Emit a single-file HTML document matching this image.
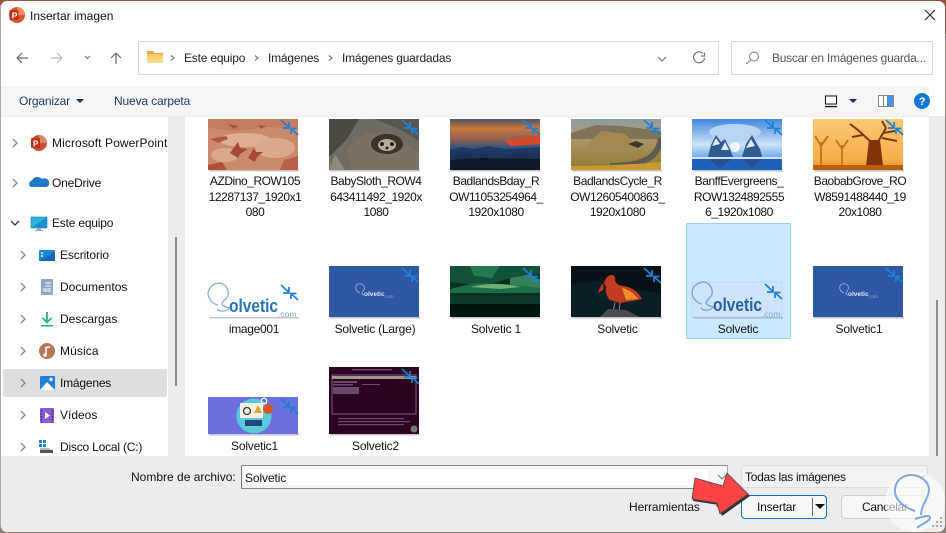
<!DOCTYPE html>
<html><head><meta charset="utf-8"><style>
html,body{margin:0;padding:0;width:946px;height:533px;overflow:hidden;background:#8a8078}
body{position:relative;font-family:"Liberation Sans",sans-serif;font-size:12px;color:#111}
div,span{position:absolute;box-sizing:border-box}
.t{white-space:nowrap;line-height:16px;letter-spacing:-.2px}
.l{text-align:center;line-height:15.5px;width:105px;white-space:pre-line;letter-spacing:-.45px}
.s{letter-spacing:-.2px}
svg{position:absolute;left:0;top:0}
</style></head><body>
<div style="left:0;top:0;width:946px;height:3px;background:#a2523c"></div>
<div style="left:0;top:0;width:1px;height:34px;background:#a2523c"></div>
<div style="left:945px;top:0;width:1px;height:34px;background:#a2523c"></div>
<div style="left:0;top:1px;width:945px;height:531px;background:#fff;border-radius:7px;border-left:1px solid #aaa"></div>
<div style="left:1px;top:86px;width:928px;height:30px;background:#f5f5f5"></div>
<div style="left:168px;top:116px;width:17px;height:340px;background:#ececec"></div>
<div style="left:929px;top:116px;width:16px;height:340px;background:#ececec"></div>
<div style="left:175px;top:237px;width:2px;height:149px;background:#8c8c8c"></div>
<div style="left:936px;top:300px;width:2px;height:156px;background:#8c8c8c"></div>
<div style="left:1px;top:456px;width:944px;height:76px;background:#ececec;border-radius:0 0 7px 7px"></div>
<div style="left:1px;top:116px;width:928px;height:1px;background:#eee"></div>
<div style="left:3px;top:369px;width:164px;height:28px;background:#dedede;border-radius:2px"></div>
<div style="left:686px;top:223px;width:105px;height:116px;background:#cce8ff;border:1px solid #99d1ff;border-radius:1px"></div>
<div style="left:138px;top:41px;width:581px;height:34px;border:1px solid #d9d9d9"></div>
<div style="left:731px;top:41px;width:202px;height:34px;border:1px solid #d9d9d9"></div>
<div style="left:241px;top:465px;width:487px;height:24px;background:#f6f6f6;border:1px solid #8a8a8a;border-left-color:#777;border-right-color:#aaa;border-radius:1px"></div>
<div style="left:243px;top:470px;width:465px;height:15px;background:#fff"></div>
<div style="left:741px;top:465px;width:187px;height:23px;background:#f2f2f2;border:1px solid #ddd;border-radius:3px"></div>
<div style="left:741px;top:495px;width:86px;height:24px;background:#f6f6f6;border:1.5px solid #0f6cbd;border-radius:4px"></div>
<div style="left:841px;top:495px;width:85px;height:24px;background:#f6f6f6;border:1px solid #cfcfcf;border-radius:4px"></div>
<div style="left:812px;top:498px;width:1px;height:18px;background:#666"></div>

<svg width="946" height="533" viewBox="0 0 946 533">
<defs>
<clipPath id="c1"><rect x="208" y="119" width="90" height="51"/></clipPath>
<clipPath id="c2"><rect x="329" y="119" width="90" height="51"/></clipPath>
<clipPath id="c3"><rect x="450" y="119" width="90" height="51"/></clipPath>
<clipPath id="c4"><rect x="571" y="119" width="90" height="51"/></clipPath>
<clipPath id="c5"><rect x="692" y="119" width="90" height="51"/></clipPath>
<clipPath id="c6"><rect x="813" y="119" width="90" height="51"/></clipPath>
<clipPath id="c9"><rect x="571" y="266" width="90" height="51"/></clipPath>
<clipPath id="c8"><rect x="450" y="266" width="90" height="51"/></clipPath>
<linearGradient id="g3" x1="0" y1="0" x2="0" y2="1"><stop offset="0" stop-color="#4a5468"/><stop offset=".18" stop-color="#c9783c"/><stop offset=".4" stop-color="#8f6050"/><stop offset=".58" stop-color="#2d5288"/><stop offset=".75" stop-color="#1e3560"/><stop offset="1" stop-color="#121c2c"/></linearGradient>
<linearGradient id="g4" x1="0" y1="0" x2="0" y2="1"><stop offset="0" stop-color="#8a9ca8"/><stop offset=".28" stop-color="#b09c70"/><stop offset="1" stop-color="#8f7a30"/></linearGradient>
<linearGradient id="g5" x1="0" y1="0" x2="0" y2="1"><stop offset="0" stop-color="#3f86dc"/><stop offset=".5" stop-color="#cfe2f8"/><stop offset=".72" stop-color="#7fb2ec"/><stop offset="1" stop-color="#1a5cb0"/></linearGradient>
<linearGradient id="g6" x1="0" y1="0" x2="0" y2="1"><stop offset="0" stop-color="#fbc878"/><stop offset=".8" stop-color="#f5ae4a"/><stop offset="1" stop-color="#e08a20"/></linearGradient>
<linearGradient id="gf" x1="0" y1="0" x2="0" y2="1"><stop offset="0" stop-color="#f8c860"/><stop offset="1" stop-color="#fbdc90"/></linearGradient>
<g id="ar" fill="none" stroke="#1f80d8" stroke-width="1.7"><path d="M-17 2L-9 9.5M-9 4V10H-15"/><path d="M0 17L-7 10.5M-7 16V10.5H-1.5"/></g>
</defs>

<!-- titlebar icon -->
<circle cx="17" cy="15" r="8" fill="#d9542b"/><path d="M17 7a8 8 0 0 1 8 8h-8z" fill="#f08a5d"/>
<rect x="9.500" y="10" width="9" height="10" rx="1" fill="#b7361a"/>
<text x="11.700" y="18.500" font-size="8.500" font-weight="bold" fill="#fff" font-family="Liberation Sans">P</text>
<path d="M925 10L935 20M935 10L925 20" stroke="#222" stroke-width="1.1"/>

<!-- nav buttons -->
<path d="M17 58H28M17 58L22 53M17 58L22 63" stroke="#666" fill="none" stroke-width="1.2"/>
<path d="M51 58H62M62 58L57 53M62 58L57 63" stroke="#bbb" fill="none" stroke-width="1.2"/>
<path d="M85 56L87.500 58.500L90 56" stroke="#777" fill="none" stroke-width="1.100"/>
<path d="M116 64V53M116 53L111 58M116 53L121 58" stroke="#666" fill="none" stroke-width="1.2"/>
<path d="M147 51h6l2 2h8v3h-16z" fill="#e6aa3c"/><rect x="147" y="54" width="16" height="9" fill="url(#gf)"/>
<path d="M171 55.500L174 58L171 60.500M255 55.500L258 58L255 60.500M329 55.500L332 58L329 60.500" stroke="#777" fill="none" stroke-width="1.2"/>
<path d="M658 57L662 61L666 57" stroke="#777" fill="none" stroke-width="1.100"/>
<path d="M703 53.500A5.500 5.500 0 1 0 704.500 58M704.500 52.500V56H701" stroke="#777" fill="none" stroke-width="1.200"/>
<circle cx="754" cy="56.500" r="4.500" fill="none" stroke="#777"/><path d="M751 60L746 64" stroke="#b08a90" stroke-width="1.300"/>

<!-- toolbar -->
<path d="M76 99h8l-4 4z" fill="#1e2f55"/>
<rect x="824" y="94" width="14" height="14" fill="#eee"/><rect x="825.500" y="96" width="11" height="8" fill="#fff" stroke="#111"/><rect x="825" y="106" width="12" height="1.200" fill="#111"/>
<path d="M849 99h8l-4 4z" fill="#1e2f55"/>
<rect x="878.500" y="95.500" width="15" height="11" fill="#fff" stroke="#888"/><rect x="887" y="96" width="6" height="10" fill="#4a90e8"/><rect x="883" y="96" width="1" height="10" fill="#888"/>
<circle cx="922" cy="101" r="8" fill="#1478d2"/>
<text x="918.700" y="105" font-size="11" font-weight="bold" fill="#fff" font-family="Liberation Sans">?</text>

<!-- tree chevrons -->
<g stroke="#888" fill="none" stroke-width="1.3">
<path d="M13 139L17 143L13 147M13 179L17 183L13 187"/>
<path d="M21 251L25 255L21 259M21 283L25 287L21 291M21 315L25 319L21 323M21 347L25 351L21 355M21 379L25 383L21 387M21 411L25 415L21 419M21 443L25 447L21 451"/>
</g>
<path d="M11 221L15 225L19 221" stroke="#333" fill="none" stroke-width="1.300"/>

<!-- tree icons -->
<circle cx="39" cy="143" r="8" fill="#c9522c"/><path d="M39 135a8 8 0 0 1 8 8h-8z" fill="#d98a60"/><rect x="31" y="138" width="9" height="10" rx="1" fill="#b7361a"/><text x="33" y="146.500" font-size="8" font-weight="bold" fill="#fff" font-family="Liberation Sans">P</text>
<path d="M31 187a3.500 3.500 0 0 1 1-6.500a6 6 0 0 1 10-1.500a4.500 4.500 0 0 1 5 8z" fill="#1f78c8"/>
<rect x="31" y="217" width="16" height="11" fill="#2bb5d8" stroke="#1a7fa8" stroke-width=".6"/><path d="M31 228L47 217V228z" fill="#1e8fd0"/><rect x="37" y="228" width="4" height="2" fill="#9ab"/><rect x="35" y="230" width="8" height="1" fill="#9ab"/>
<rect x="39" y="250" width="16" height="11" rx="1" fill="#1e88d0"/><path d="M39 261L55 252V261z" fill="#1768b8"/><rect x="41" y="252" width="2" height="2" fill="#bdf"/><rect x="41" y="255" width="2" height="2" fill="#bdf"/>
<rect x="41" y="279" width="12" height="16" rx="1" fill="#8ea6c8"/><path d="M45 283h6M45 286h6M43 289h8M43 291h8" stroke="#fff" stroke-width="1"/>
<path d="M47 312V322M42.500 318L47 322.500L51.500 318" stroke="#22b088" stroke-width="1.700" fill="none"/><rect x="41" y="325" width="12" height="1.500" fill="#22b088"/>
<circle cx="47" cy="351" r="8" fill="#b5765a"/><path d="M46 355V347.500L50 347" stroke="#fff" stroke-width="1.500" fill="none"/><circle cx="45" cy="355" r="1.800" fill="#fff"/>
<rect x="40" y="376" width="15" height="14" rx="1" fill="#1e7fd8"/><path d="M40 390L47 382L55 390z" fill="#fff"/><circle cx="51" cy="379.500" r="1.700" fill="#fff"/>
<rect x="40" y="408" width="14" height="15" rx="1" fill="#8a5cd0"/><path d="M45 412V419L50 415.500z" fill="#fff"/><path d="M41.500 410v13M52.500 410v13" stroke="#3c2a80" stroke-width="1.400" stroke-dasharray="1.500 1.500"/>
<rect x="39" y="440" width="3" height="3" fill="#1e7fd8"/><rect x="43" y="440" width="3" height="3" fill="#1e7fd8"/><rect x="39" y="444" width="3" height="3" fill="#1e7fd8"/><rect x="43" y="444" width="3" height="3" fill="#1e7fd8"/><path d="M40 448H49L53 451H40z" fill="#bbb"/><rect x="40" y="450" width="13" height="3" fill="#555"/>

<!-- thumb shadows -->
<g fill="#000" opacity=".22">
<rect x="209" y="170" width="90" height="1.500"/><rect x="330" y="170" width="90" height="1.500"/><rect x="451" y="170" width="90" height="1.500"/><rect x="572" y="170" width="90" height="1.500"/><rect x="693" y="170" width="90" height="1.500"/><rect x="814" y="170" width="90" height="1.500"/>
<rect x="209" y="317" width="90" height="1.500"/><rect x="330" y="317" width="90" height="1.500"/><rect x="451" y="317" width="90" height="1.500"/><rect x="572" y="317" width="90" height="1.500"/><rect x="693" y="317" width="90" height="1.500"/><rect x="814" y="317" width="90" height="1.500"/>
<rect x="209" y="434" width="90" height="1.500"/><rect x="330" y="434" width="90" height="1.500"/>
</g>

<!-- 1 dino -->
<g clip-path="url(#c1)"><rect x="208" y="119" width="90" height="51" fill="#cc8a6c"/>
<path d="M208 119h90v10l-30 -2l-30 4l-30-3z" fill="#c47c5e"/>
<ellipse cx="245" cy="140" rx="26" ry="7" fill="#deae90"/><ellipse cx="275" cy="148" rx="20" ry="10" fill="#dba98a"/><ellipse cx="225" cy="155" rx="14" ry="7" fill="#dba98a"/>
<path d="M230 153l8-11l2 6l8 1l-8 5l-2 4z" fill="#a34a32"/><path d="M248 158l6-10l2 4l7 0l-6 5l-2 5z" fill="#a34a32"/>
<path d="M210 139l16-3l2 3l-10 4z" fill="#b5553c"/><path d="M208 165l14-3l5 8h-19z" fill="#b34e38"/><path d="M284 160l14-4v14h-18z" fill="#ba6048"/><path d="M228 124l10 2l-4 3z" fill="#a8503a"/><path d="M258 125l8 1l-5 3z" fill="#a8503a"/></g>
<!-- 2 sloth -->
<g clip-path="url(#c2)"><rect x="329" y="119" width="90" height="51" fill="#6f6a62"/>
<path d="M329 119h30l-12 20l-18 18z" fill="#4d4842"/><path d="M375 119h44v22l-20-12z" fill="#5a554f"/>
<path d="M352 170l-6-20l20-18l38 8l15 14v16z" fill="#7a7064"/><path d="M329 170l6-16l10 16z" fill="#8f897e"/>
<ellipse cx="387" cy="144" rx="16" ry="10" fill="#3c342a"/><ellipse cx="387" cy="145" rx="9" ry="6" fill="#b5ac9c"/><circle cx="382" cy="144" r="2" fill="#222"/><circle cx="392" cy="144" r="2" fill="#222"/><circle cx="387" cy="148" r="1.500" fill="#222"/></g>
<!-- 3 badlands -->
<g clip-path="url(#c3)"><rect x="450" y="119" width="90" height="51" fill="url(#g3)"/>
<path d="M505 140l35-4v8l-30 2z" fill="#d9482a"/><path d="M450 150l12-3l12 2l14-3l18 3l34-2v23h-90z" fill="#1c2f55" opacity=".7"/><path d="M450 160l30-2l60 1v11h-90z" fill="#10192a"/></g>
<!-- 4 cycle -->
<g clip-path="url(#c4)"><rect x="571" y="119" width="90" height="51" fill="url(#g4)"/>
<path d="M571 133l25-8l25 1l40 5v8h-90z" fill="#7f7458"/><path d="M585 148l16-17l24 3l15 15z" fill="#a08a50"/><path d="M628 144l8-3l8 3l-6 4z" fill="#3a3a30"/>
<path d="M610 166q30 0 42-10q8-8 9-18" fill="none" stroke="#5f5a52" stroke-width="6"/><path d="M571 166q45 0 90-4v8h-90z" fill="#c89a30"/></g>
<!-- 5 banff -->
<g clip-path="url(#c5)"><rect x="692" y="119" width="90" height="51" fill="url(#g5)"/>
<ellipse cx="735" cy="132" rx="26" ry="8" fill="#b8d4f4"/>
<path d="M708 157l3-12l5-10l5 7l4-3l5 10l3 8z" fill="#2c5c90"/><path d="M742 157l4-13l6-9l5 9l3 5l2 8z" fill="#2c5c90"/>
<path d="M712 146l4-8l4 6zM721 150l4-8l4 8zM746 148l5-9l4 7z" fill="#dfeaf8"/>
<circle cx="735" cy="147" r="5" fill="#f2f8ff"/><rect x="692" y="157" width="90" height="13" fill="#1d62b8"/><rect x="692" y="157" width="90" height="2" fill="#cfe4fb"/><path d="M708 159l12 9l12-9zM742 159l10 9l10-9z" fill="#2a4f8c"/></g>
<!-- 6 baobab -->
<g clip-path="url(#c6)"><rect x="813" y="119" width="90" height="51" fill="url(#g6)"/>
<g stroke="#c87818" fill="none" stroke-width="2"><path d="M821 165V142M821 146L815 136M821 146L828 136"/><path d="M842 165V145M842 149L836 140M842 149L848 140"/></g>
<path d="M866 166l3-26h11l3 26z" fill="#82340c"/><g stroke="#82340c" fill="none" stroke-width="2"><path d="M871 142L858 130M858 130L850 124M863 135L852 137"/><path d="M878 142L886 128M883 133L895 131M886 128L882 121M882 138L897 141"/></g>
<rect x="813" y="165" width="90" height="5" fill="#b8600e"/></g>

<!-- solvetic images -->
<rect x="208" y="283" width="90" height="34" fill="#fff"/>
<path d="M218 305c-6-1-10-7-10-12c1-7 7-10 12-10c6 1 9 7 8 12c-1 4-6 6-6 9c1 3 5 3 7 4c-2 4-10 4-12 1" fill="none" stroke="#88aede" stroke-width="1.300"/>
<text x="229" y="312" font-family="Liberation Sans" font-size="18" font-weight="bold" fill="#2674b8" textLength="49" lengthAdjust="spacingAndGlyphs">olvetic</text>
<text x="278" y="317" font-family="Liberation Sans" font-size="8.500" fill="#88aede">.com</text>
<rect x="329" y="266" width="90" height="51" fill="#2e58a4"/>
<path d="M360 293c-3-1-5-4-4-7c1-3 6-3 8 0c2 3-2 5-2 8c0 1 2 1 2 1" fill="none" stroke="#9bb6dd" stroke-width=".8"/>
<text x="364" y="296" font-family="Liberation Sans" font-size="6.500" font-weight="bold" fill="#dbe6f5">olvetic</text>
<text x="384" y="298" font-family="Liberation Sans" font-size="4.500" fill="#8aa8d8">.com</text>

<g clip-path="url(#c8)"><rect x="450" y="266" width="90" height="51" fill="#0a2f24"/>
<path d="M450 266h90v8l-30 4l-25 8l-35-4z" fill="#125238"/><path d="M470 266l30 0l-8 12l-18-2z" fill="#267a52"/><path d="M510 278l18-3l12 4v9h-30z" fill="#35805a"/>
<path d="M450 289l25-6l30 1l35 4v5h-90z" fill="#1a6e4a"/><path d="M470 287q25-6 50 0l-20 2z" fill="#6fae74"/><rect x="450" y="296" width="90" height="8" fill="#0b3a2b"/><path d="M450 304h90v13h-90z" fill="#021410"/></g>

<g clip-path="url(#c9)"><rect x="571" y="266" width="90" height="51" fill="#0a1218"/>
<path d="M571 284l35-4l30 10l25 4v23h-90z" fill="#0a1f24"/>
<path d="M603 290q1-14 8-15q5 0 4 5q1 5 8 6q12 1 19 13l-10 2l-12 2l-10-3q-5-5-4-13q-1-4-3-3q-2 0-5 9z" fill="#c43a22"/><path d="M622 288q10 2 16 11l-12 1z" fill="#e8902a"/>
<path d="M615 302l-2 10M620 303l-1 9" stroke="#9a7a6a" stroke-width="1"/><path d="M600 317l8-8l18 1l14 7z" fill="#4a4a50"/></g>

<rect x="692" y="282" width="90" height="35" fill="#cfe4fb" stroke="#b7d4f2" stroke-width=".6"/>
<path d="M702 304c-6-1-10-7-10-12c1-7 7-10 12-10c6 1 9 7 8 12c-1 4-6 6-6 9c1 3 5 3 7 4c-2 4-10 4-12 1" fill="none" stroke="#7ea0d4" stroke-width="1.300"/>
<text x="713" y="311" font-family="Liberation Sans" font-size="18" font-weight="bold" fill="#24649f" textLength="49" lengthAdjust="spacingAndGlyphs">olvetic</text>
<text x="762" y="317" font-family="Liberation Sans" font-size="8.500" fill="#80a8d8">.com</text>

<rect x="813" y="266" width="90" height="51" fill="#2e58a4"/>
<path d="M844 293c-3-1-5-4-4-7c1-3 6-3 8 0c2 3-2 5-2 8c0 1 2 1 2 1" fill="none" stroke="#9bb6dd" stroke-width=".8"/>
<text x="848" y="296" font-family="Liberation Sans" font-size="6.500" font-weight="bold" fill="#dbe6f5">olvetic</text>
<text x="868" y="298" font-family="Liberation Sans" font-size="4.500" fill="#8aa8d8">.com</text>

<rect x="208" y="397" width="90" height="37" fill="#6b6fe0"/>
<circle cx="254" cy="416" r="17.500" fill="#5cc9d8"/><rect x="240" y="403" width="23" height="15" rx="1" fill="#f4f0e4"/>
<circle cx="247" cy="411" r="3.500" fill="none" stroke="#333" stroke-width="1.300"/><path d="M258 405l4 8h-8z" fill="#e0a030"/><rect x="245" y="420" width="17" height="6" fill="#1e4a78"/><circle cx="268" cy="409" r="5" fill="#d9531e"/><circle cx="264" cy="401" r="2.800" fill="none" stroke="#fff" stroke-width="1.200"/>

<rect x="329" y="367" width="90" height="67" fill="#2e0320"/>
<rect x="332" y="375" width="84" height="39" fill="none" stroke="#7a5a78"/><rect x="332" y="376" width="84" height="3" fill="#9a9a8a"/>
<g fill="#6a4a6c"><rect x="333" y="381" width="24" height="2"/><rect x="333" y="384" width="20" height="1.500"/><rect x="333" y="387" width="26" height="7"/><rect x="362" y="384" width="18" height="1"/><rect x="352" y="369" width="40" height="1.500"/><rect x="338" y="418" width="66" height="1.200"/><rect x="338" y="421" width="72" height="1.200"/><rect x="338" y="424" width="66" height="1.200"/></g>
<circle cx="414" cy="429" r="3.500" fill="#777"/>

<!-- arrows overlay -->
<use href="#ar" x="298" y="118"/><use href="#ar" x="419" y="118"/><use href="#ar" x="540" y="118"/><use href="#ar" x="661" y="118"/><use href="#ar" x="782" y="118"/><use href="#ar" x="903" y="118"/>
<use href="#ar" x="298" y="283"/><use href="#ar" x="419" y="266"/><use href="#ar" x="540" y="266"/><use href="#ar" x="661" y="266"/><use href="#ar" x="782" y="282"/><use href="#ar" x="903" y="266"/>
<use href="#ar" x="298" y="397"/><use href="#ar" x="419" y="367"/>

<!-- footer controls -->
<path d="M718 475l4 4l4-4" stroke="#777" fill="none" stroke-width="1"/>
<path d="M917 475l4 4l4-4" stroke="#777" fill="none" stroke-width="1"/>
<path d="M815 504h10l-5 5z" fill="#111"/>
<path d="M716 505h6l-3 4z" fill="#111"/>
</svg>

<span class="t" style="left:30px;top:8px;letter-spacing:0">Insertar imagen</span>
<span class="t" style="left:184px;top:50px;color:#222">Este equipo</span>
<span class="t" style="left:268px;top:50px;color:#222">Imágenes</span>
<span class="t" style="left:342px;top:50px;color:#222">Imágenes guardadas</span>
<span class="t" style="left:772px;top:50px;color:#555;letter-spacing:-.25px">Buscar en Imágenes guarda...</span>
<span class="t" style="left:19px;top:93px;color:#1e3a5c">Organizar</span>
<span class="t" style="left:114px;top:93px;color:#1e3a5c;letter-spacing:-.15px">Nueva carpeta</span>

<span class="t" style="left:52px;top:135px;letter-spacing:.1px">Microsoft PowerPoint</span>
<span class="t" style="left:52px;top:175px">OneDrive</span>
<span class="t" style="left:52px;top:215px">Este equipo</span>
<span class="t" style="left:60px;top:247px;letter-spacing:-.1px">Escritorio</span>
<span class="t" style="left:60px;top:279px;letter-spacing:0">Documentos</span>
<span class="t" style="left:60px;top:311px;letter-spacing:0">Descargas</span>
<span class="t" style="left:60px;top:343px;letter-spacing:.1px">Música</span>
<span class="t" style="left:60px;top:375px">Imágenes</span>
<span class="t" style="left:60px;top:407px;letter-spacing:0">Vídeos</span>
<span class="t" style="left:60px;top:439px">Disco Local (C:)</span>

<div class="l" style="left:202.500px;top:174px">AZDino_ROW105
12287137_1920x1
080</div>
<div class="l" style="left:323.500px;top:174px">BabySloth_ROW4
643411492_1920x
1080</div>
<div class="l" style="left:443.500px;top:174px">BadlandsBday_R
OW11053254964_
1920x1080</div>
<div class="l" style="left:565px;top:174px">BadlandsCycle_R
OW12605400863_
1920x1080</div>
<div class="l" style="left:686.500px;top:174px">BanffEvergreens_
ROW1324892555
6_1920x1080</div>
<div class="l" style="left:807.500px;top:174px">BaobabGrove_RO
W8591488440_19
20x1080</div>

<div class="l s" style="left:201.500px;top:322px;letter-spacing:-.3px">image001</div>
<div class="l s" style="left:322.500px;top:322px">Solvetic (Large)</div>
<div class="l s" style="left:443.500px;top:322px">Solvetic 1</div>
<div class="l s" style="left:565px;top:322px">Solvetic</div>
<div class="l s" style="left:685.500px;top:322px">Solvetic</div>
<div class="l s" style="left:806.500px;top:322px">Solvetic1</div>
<div class="l s" style="left:202px;top:439px">Solvetic1</div>
<div class="l s" style="left:323px;top:439px">Solvetic2</div>

<span class="t" style="left:131px;top:469px;letter-spacing:0">Nombre de archivo:</span>
<span class="t" style="left:245px;top:470px;letter-spacing:-.1px">Solvetic</span>
<span class="t" style="left:745px;top:469px;letter-spacing:-.3px">Todas las imágenes</span>
<span class="t" style="left:629px;top:499px;letter-spacing:-.1px">Herramientas</span>
<span class="t" style="left:757px;top:499px">Insertar</span>
<span class="t" style="left:862px;top:499px;letter-spacing:-.3px">Cancelar</span>

<svg width="946" height="533" viewBox="0 0 946 533">
<path d="M749 495L728 474L724 487L695 479L692 500L718 504L721 515z" fill="#333" transform="translate(1 1)"/>
<path d="M748 494L727 473L723 486L695 478L692 499L717 503L720 514z" fill="#fc4444" stroke="#444" stroke-width=".8" stroke-linejoin="round"/>
<circle cx="915" cy="502" r="30" fill="#fff" opacity=".6"/>
<path d="M915 511C900 506 894 497 895 489C896 480 903 475 911 475C921 475 929 482 929 490C929 498 921 505 921 515" fill="none" stroke="#7ea9dc" stroke-width="2"/>
<path d="M915 519C921 517 931 514 930 518C929 522 921 524 917 528" fill="none" stroke="#7ea9dc" stroke-width="2"/>
<g fill="#a9a9a9"><rect x="940" y="525" width="2" height="2"/><rect x="936" y="525" width="2" height="2"/><rect x="940" y="521" width="2" height="2"/><rect x="932" y="525" width="2" height="2"/><rect x="936" y="521" width="2" height="2"/><rect x="940" y="517" width="2" height="2"/></g>
</svg>
</body></html>
